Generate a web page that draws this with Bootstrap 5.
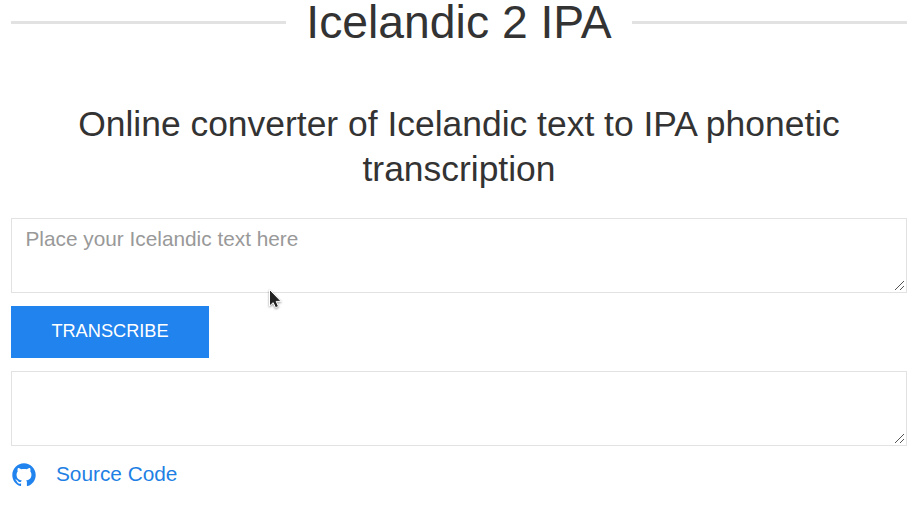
<!DOCTYPE html>
<html lang="en">
<head>
<meta charset="utf-8">
<meta name="viewport" content="width=device-width, initial-scale=1">
<title>Icelandic 2 IPA</title>
<link rel="stylesheet" href="https://cdn.jsdelivr.net/npm/bootstrap@5.3.0/dist/css/bootstrap.min.css">
<style>
body{font-family:"Liberation Sans",Arial,sans-serif;color:#333;padding:0 10px 0 11px}
.page-title{font-size:46.3px;line-height:45px;height:45px;gap:20px}
.page-title::before,.page-title::after{content:"";flex:1;height:3px;background:#e2e2e2}
.page-subtitle{font-size:35.45px;line-height:45px;padding-top:57px;margin-bottom:26px}
.text-field{display:block;height:75px;font-size:20.8px;line-height:29px;padding:5px 13.5px;border:1px solid #e2e2e2;border-radius:0;color:#666;resize:none}
.text-field::placeholder{color:#999}
.grip{position:absolute;right:3px;bottom:3px}
.btn-transcribe{--bs-btn-bg:#2083ee;--bs-btn-color:#fff;width:198px;height:52px;font-size:18.2px;margin:13px 0;border:0;border-radius:0;padding:0 0 2px;line-height:50px}
.source-link{color:#1e7fe4;font-size:20.8px;line-height:30px;margin-top:13px;gap:19px}
.source-link svg{color:#2083ee;position:relative;top:1px}
.pointer{position:absolute;left:267px;top:288px;filter:drop-shadow(0 1px 1px #0006)}
</style>
</head>
<body>
<h1 class="page-title d-flex align-items-center fw-normal mb-0"><span>Icelandic 2 IPA</span></h1>
<h2 class="page-subtitle text-center fw-normal">Online converter of Icelandic text to IPA phonetic transcription</h2>
<div class="position-relative">
<textarea class="form-control text-field" placeholder="Place your Icelandic text here"></textarea>
<svg class="grip" width="9" height="9" viewBox="0 0 9 9" stroke="#555" aria-hidden="true"><path d="M0 9l9-9M5 9l4-4"/></svg>
</div>
<button class="btn btn-transcribe d-block text-uppercase" type="button">Transcribe</button>
<div class="position-relative">
<textarea class="form-control text-field" aria-label="IPA"></textarea>
<svg class="grip" width="9" height="9" viewBox="0 0 9 9" stroke="#555" aria-hidden="true"><path d="M0 9l9-9M5 9l4-4"/></svg>
</div>
<a class="source-link d-inline-flex align-items-center text-decoration-none" href="#">
<svg width="26" height="26" viewBox="0 0 20 20" fill="currentColor" aria-hidden="true"><path d="M10,1 C5.03,1 1,5.03 1,10 C1,13.98 3.58,17.35 7.16,18.54 C7.61,18.62 7.77,18.34 7.77,18.11 C7.77,17.9 7.76,17.33 7.76,16.58 C5.26,17.12 4.73,15.37 4.73,15.37 C4.32,14.33 3.73,14.05 3.73,14.05 C2.91,13.5 3.79,13.5 3.79,13.5 C4.69,13.56 5.17,14.43 5.17,14.43 C5.97,15.8 7.28,15.41 7.79,15.18 C7.87,14.6 8.1,14.2 8.36,13.98 C6.36,13.75 4.26,12.98 4.26,9.53 C4.26,8.55 4.61,7.74 5.19,7.11 C5.1,6.88 4.79,5.97 5.28,4.73 C5.28,4.73 6.04,4.49 7.75,5.65 C8.47,5.45 9.24,5.35 10,5.35 C10.76,5.35 11.53,5.45 12.25,5.65 C13.97,4.48 14.72,4.73 14.72,4.73 C15.21,5.97 14.9,6.88 14.81,7.11 C15.39,7.74 15.73,8.54 15.73,9.53 C15.73,12.99 13.63,13.75 11.62,13.97 C11.94,14.25 12.23,14.8 12.23,15.64 C12.23,16.84 12.22,17.81 12.22,18.11 C12.22,18.35 12.38,18.63 12.84,18.54 C16.42,17.35 19,13.98 19,10 C19,5.03 14.97,1 10,1 Z"/></svg>
<span>Source Code</span></a>
<svg class="pointer" width="18" height="24" viewBox="0 0 18 24" aria-hidden="true"><path d="M2.5 1.5V18l3.7-3.3 2.3 5 3-1.3-2.3-5h4.9z" fill="#222" stroke="#fff"/></svg>
</body>
</html>
